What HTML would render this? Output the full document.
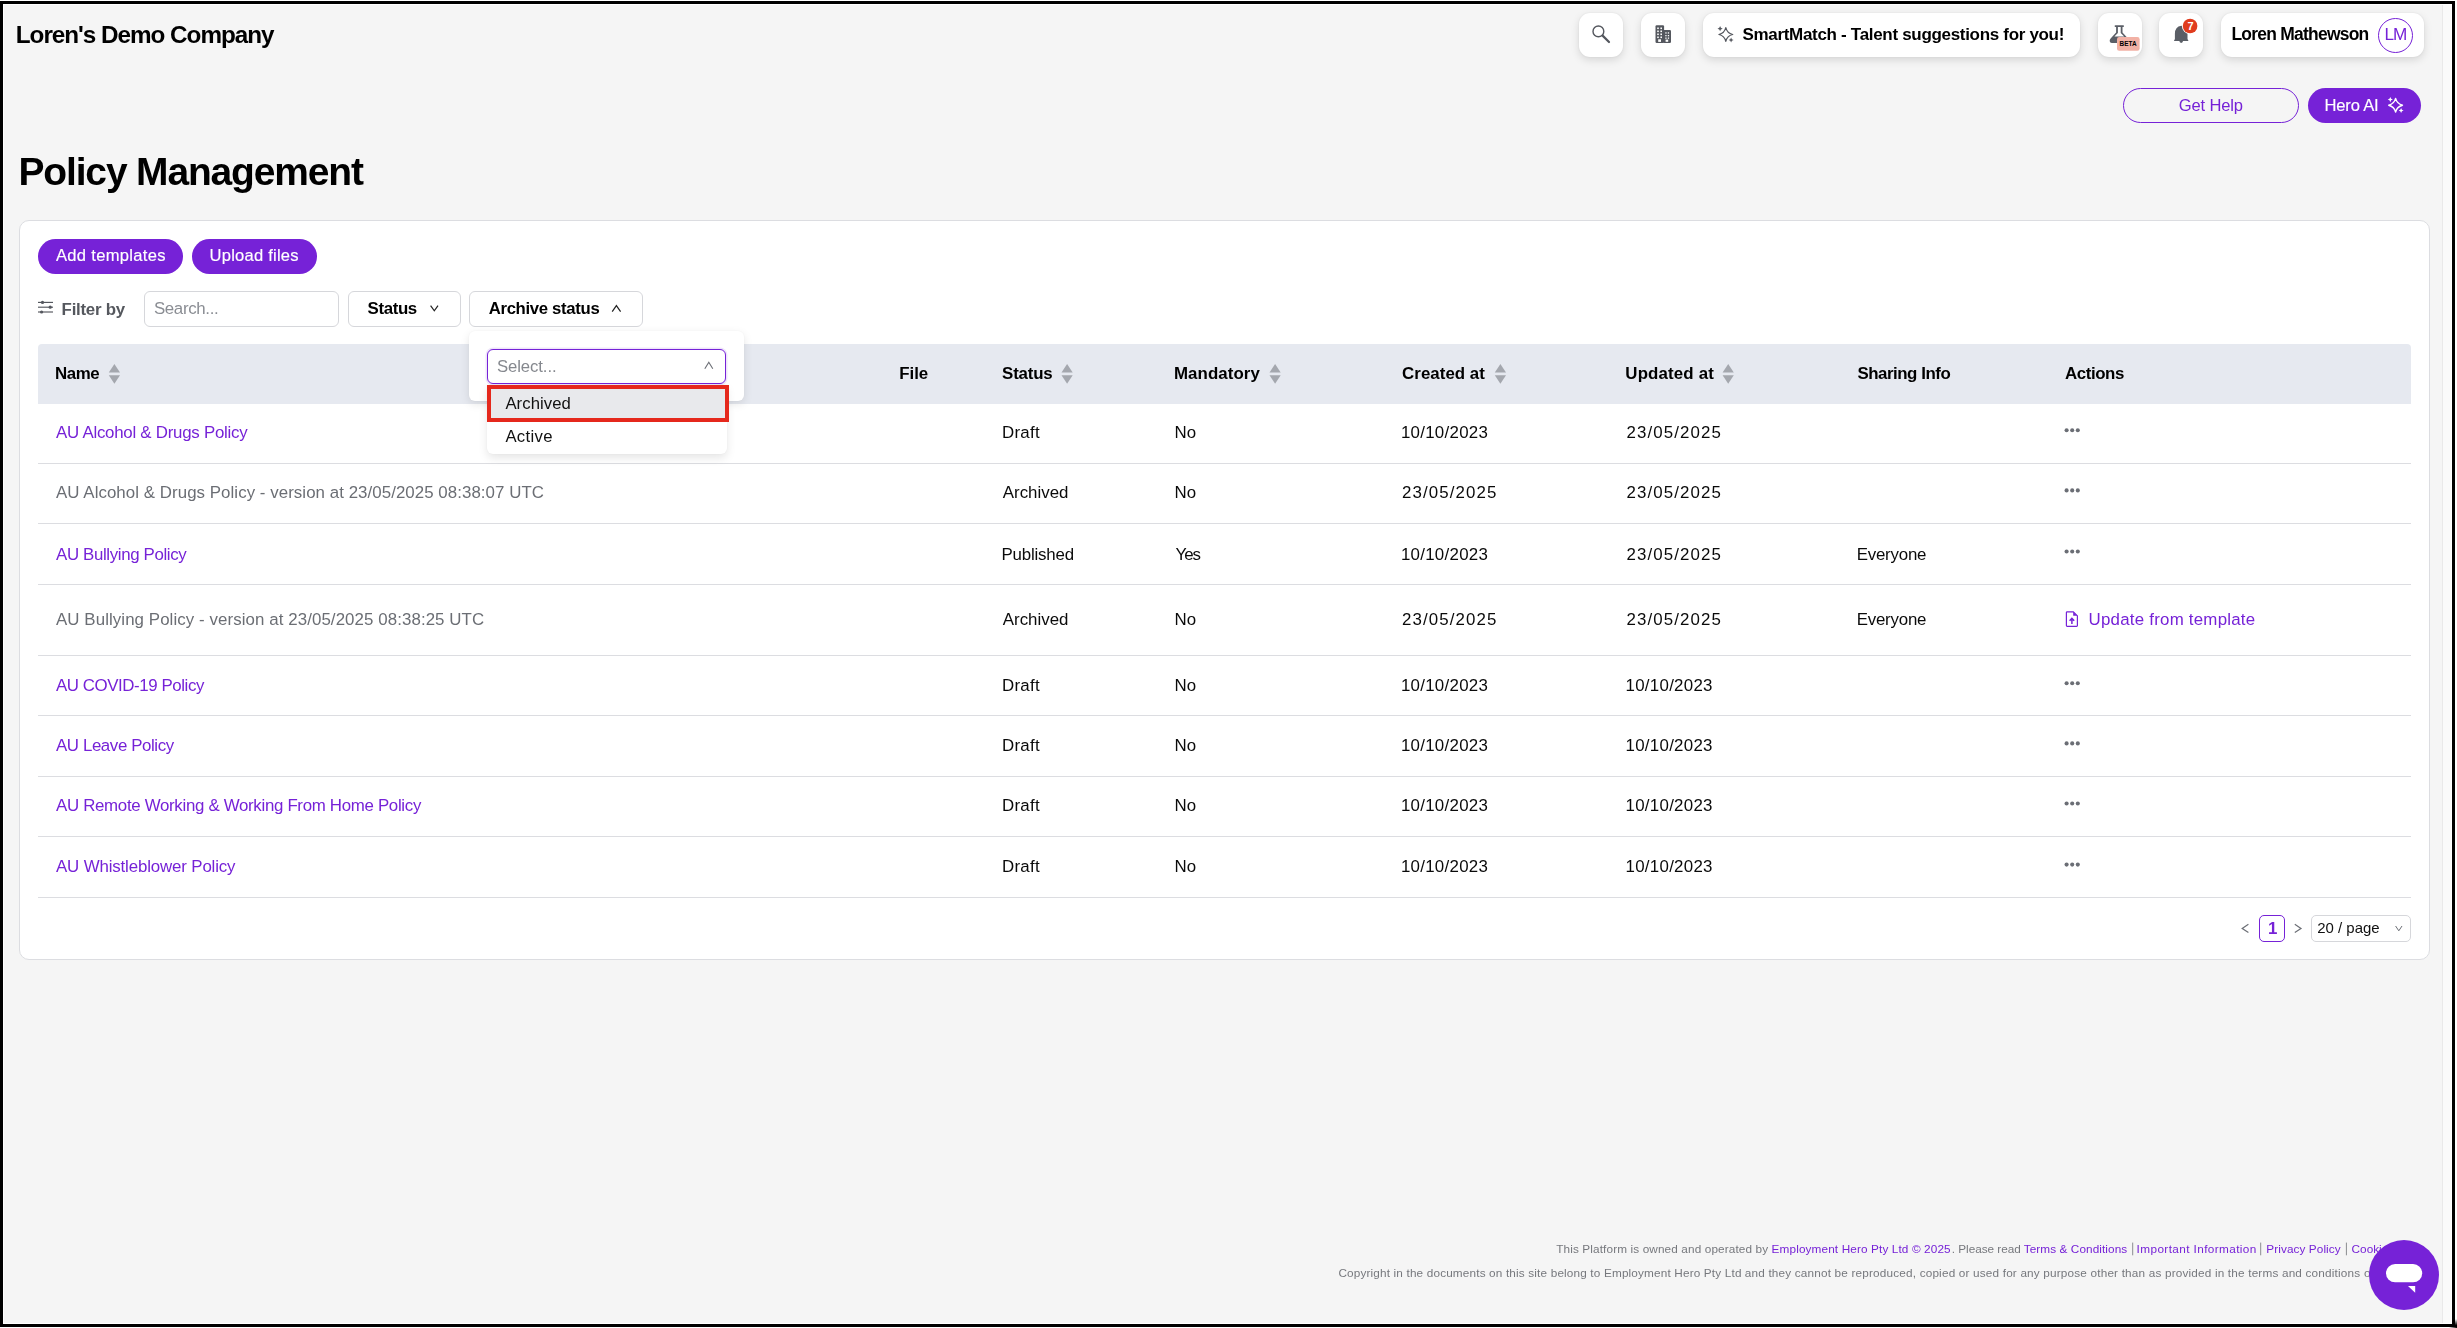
<!DOCTYPE html>
<html><head><meta charset="utf-8">
<style>
html,body{margin:0;padding:0;}
body{width:2457px;height:1328px;overflow:hidden;position:relative;background:#fff;font-family:"Liberation Sans",sans-serif;}
.a{position:absolute;box-sizing:border-box;}
.tl{position:absolute;left:0;top:0;font-family:"Liberation Sans",sans-serif;will-change:transform;}
.tb{background:#fff;border-radius:11px;box-shadow:0 3px 9px rgba(0,0,0,0.13),0 0 2px rgba(0,0,0,0.07);}
.line{position:absolute;left:38px;width:2373px;height:1px;background:#dcdde1;}
.ic{position:absolute;left:0;top:0;overflow:visible;}
</style></head><body>
<!-- frame -->
<div class="a" style="left:0;top:1px;width:2455px;height:1326px;background:#000"></div>
<div class="a" style="left:3px;top:4px;width:2449px;height:1320px;background:#fff"></div>
<div class="a" style="left:4px;top:5px;width:2447px;height:1318px;background:#f5f5f5"></div>
<div class="a" style="left:2442px;top:5px;width:1px;height:1318px;background:#e9e9e9"></div>
<div class="a" style="left:2443px;top:5px;width:8px;height:1318px;background:#fafafa"></div>
<div class="a" style="left:2455px;top:1319px;width:2px;height:9px;background:linear-gradient(#fff,#000 70%)"></div>
<div class="a" style="left:2449px;top:1327px;width:8px;height:1px;background:linear-gradient(90deg,#fff,#000)"></div>

<!-- top bar -->
<div class="a tb" style="left:1579px;top:13px;width:44px;height:44px"></div>
<div class="a tb" style="left:1641px;top:13px;width:44px;height:44px"></div>
<div class="a tb" style="left:1703px;top:13px;width:377px;height:44px"></div>
<div class="a tb" style="left:2098px;top:13px;width:44px;height:44px"></div>
<div class="a tb" style="left:2159px;top:13px;width:44px;height:44px"></div>
<div class="a tb" style="left:2221px;top:13px;width:203px;height:44px"></div>
<div class="a" style="left:2378px;top:18px;width:35px;height:35px;border:1.3px solid #7622d7;border-radius:50%"></div>

<div class="a" style="left:2123px;top:88px;width:176px;height:35px;border:1.3px solid #7622d7;border-radius:18px"></div>
<div class="a" style="left:2308px;top:88px;width:113px;height:35px;background:#7622d7;border-radius:18px"></div>

<!-- card -->
<div class="a" style="left:19px;top:220px;width:2411px;height:740px;background:#fff;border:1px solid #dcdde1;border-radius:10px"></div>
<div class="a" style="left:38px;top:239px;width:145px;height:35px;background:#7622d7;border-radius:18px"></div>
<div class="a" style="left:192px;top:239px;width:125px;height:35px;background:#7622d7;border-radius:18px"></div>

<div class="a" style="left:144px;top:291px;width:195px;height:36px;border:1px solid #d6d7db;border-radius:6px"></div>
<div class="a" style="left:348px;top:291px;width:113px;height:36px;border:1px solid #d6d7db;border-radius:6px"></div>
<div class="a" style="left:469px;top:291px;width:174px;height:36px;border:1px solid #d6d7db;border-radius:6px"></div>

<!-- table -->
<div class="a" style="left:38px;top:344px;width:2373px;height:60px;background:#e6e9f0;border-radius:4px 4px 0 0"></div>
<div class="line" style="top:463px"></div>
<div class="line" style="top:523px"></div>
<div class="line" style="top:584px"></div>
<div class="line" style="top:655px"></div>
<div class="line" style="top:715px"></div>
<div class="line" style="top:776px"></div>
<div class="line" style="top:836px"></div>
<div class="line" style="top:897px"></div>

<!-- pagination -->
<div class="a" style="left:2259px;top:915px;width:26px;height:27px;border:1px solid #7622d7;border-radius:5px"></div>
<div class="a" style="left:2311px;top:915px;width:100px;height:27px;border:1px solid #d6d7db;border-radius:5px"></div>

<!-- icons main -->
<svg class="ic" width="2457" height="1328">
  <!-- search -->
  <circle cx="1598.4" cy="31.4" r="5.4" fill="none" stroke="#54575e" stroke-width="1.4"/>
  <line x1="1602.6" y1="35.6" x2="1609" y2="42" stroke="#54575e" stroke-width="2.2" stroke-linecap="round"/>
  <!-- building -->
  <g fill="#54575e">
    <rect x="1655.5" y="25.3" width="8.6" height="17.6" rx="1.2"/>
    <rect x="1663.2" y="30" width="7.8" height="12.9" rx="1.2"/>
  </g>
  <g fill="#fff">
    <rect x="1657.2" y="27.5" width="1.6" height="1.6"/><rect x="1660.4" y="27.5" width="1.6" height="1.6"/>
    <rect x="1657.2" y="30.5" width="1.6" height="1.6"/><rect x="1660.4" y="30.5" width="1.6" height="1.6"/>
    <rect x="1657.2" y="33.5" width="1.6" height="1.6"/><rect x="1660.4" y="33.5" width="1.6" height="1.6"/>
    <rect x="1657.2" y="36.5" width="1.6" height="1.6"/><rect x="1660.4" y="36.5" width="1.6" height="1.6"/>
    <rect x="1658.2" y="39.3" width="2.8" height="2.6"/>
    <rect x="1665.3" y="32.3" width="1.3" height="1.3"/><rect x="1667.8" y="32.3" width="1.3" height="1.3"/>
    <rect x="1665.3" y="35" width="1.3" height="1.3"/><rect x="1667.8" y="35" width="1.3" height="1.3"/>
    <rect x="1665.3" y="37.5" width="1.3" height="1.3"/><rect x="1667.8" y="37.5" width="1.3" height="1.3"/>
    <rect x="1665.6" y="39.6" width="2.6" height="2.2"/>
  </g>
  <!-- sparkle smartmatch -->
  <path d="M1725.80 27.70 Q1727.10 33.20 1732.70 34.50 Q1727.10 35.80 1725.80 41.30 Q1724.50 35.80 1718.90 34.50 Q1724.50 33.20 1725.80 27.70 Z" fill="none" stroke="#54575e" stroke-width="1.25" stroke-linejoin="round"/>
  <path d="M1720.10 26.10 Q1720.40 28.40 1722.70 28.70 Q1720.40 29.00 1720.10 31.30 Q1719.80 29.00 1717.50 28.70 Q1719.80 28.40 1720.10 26.10 Z" fill="#54575e"/>
  <path d="M1731.10 37.40 Q1731.40 39.60 1733.60 39.90 Q1731.40 40.20 1731.10 42.40 Q1730.80 40.20 1728.60 39.90 Q1730.80 39.60 1731.10 37.40 Z" fill="#54575e"/>
  <!-- flask -->
  <path d="M2115.4 25.2 H2123.2 Q2124 25.2 2124 26.1 Q2124 27 2123.2 27 H2122.5 V32.4 L2128 38.4 Q2129.3 39.9 2128.8 41.4 Q2128.3 42.9 2126.5 42.9 H2112.1 Q2110.3 42.9 2109.8 41.4 Q2109.3 39.9 2110.6 38.4 L2116.1 32.4 V27 H2115.4 Q2114.6 27 2114.6 26.1 Q2114.6 25.2 2115.4 25.2 Z" fill="#5a5e66"/>
  <path d="M2117.9 27 H2120.7 V33 L2124.2 36.6 H2114.4 L2117.9 33 Z" fill="#fff"/>
  <rect x="2117" y="37.1" width="22.6" height="13.6" rx="2.2" fill="#f2b1a5"/>
  <text x="2119.6" y="45.9" font-family="Liberation Sans" font-weight="bold" font-size="6.8" textLength="17" lengthAdjust="spacingAndGlyphs" fill="#000">BETA</text>
  <!-- bell -->
  <path d="M2181.2 25.7 q-6.2 0.8 -6.3 8 v5.4 l-1 1.8 h14.6 l-1 -1.8 v-5.4 q-0.1 -7.2 -6.3 -8 z" fill="#5a5e66"/>
  <path d="M2179.4 41.1 a1.8 1.8 0 0 0 3.6 0 z" fill="#5a5e66"/>
  <circle cx="2190.1" cy="26" r="8.2" fill="#fff"/>
  <circle cx="2190.1" cy="26" r="7.3" fill="#e03c1e"/>
  <text x="2187.4" y="30.2" font-family="Liberation Sans" font-weight="bold" font-size="11" fill="#fff">7</text>
  <!-- hero ai sparkle -->
  <path d="M2395.60 98.40 Q2397.00 103.80 2402.50 105.20 Q2397.00 106.60 2395.60 112.00 Q2394.20 106.60 2388.70 105.20 Q2394.20 103.80 2395.60 98.40 Z" fill="none" stroke="#fff" stroke-width="1.4" stroke-linejoin="round"/>
  <path d="M2390.30 97.00 Q2390.65 99.25 2392.90 99.60 Q2390.65 99.95 2390.30 102.20 Q2389.95 99.95 2387.70 99.60 Q2389.95 99.25 2390.30 97.00 Z" fill="#fff"/>
  <path d="M2401.10 108.10 Q2401.45 110.25 2403.60 110.60 Q2401.45 110.95 2401.10 113.10 Q2400.75 110.95 2398.60 110.60 Q2400.75 110.25 2401.10 108.10 Z" fill="#fff"/>
  <!-- filter icon -->
  <g stroke="#54575e" stroke-width="1.15">
    <line x1="38" y1="302.4" x2="53" y2="302.4"/>
    <line x1="38" y1="307.2" x2="53" y2="307.2"/>
    <line x1="38" y1="312" x2="53" y2="312"/>
  </g>
  <g fill="#54575e">
    <circle cx="42.5" cy="302.4" r="1.6"/>
    <circle cx="50.2" cy="307.2" r="1.6"/>
    <circle cx="41.6" cy="312" r="1.6"/>
  </g>
  <!-- chevrons -->
  <path d="M430.6 305.6 L434.3 310.8 L438 305.6" fill="none" stroke="#222" stroke-width="1.2"/>
  <path d="M612.2 311.6 L616.4 305.6 L620.6 311.6" fill="none" stroke="#222" stroke-width="1.2"/>
  <!-- sort icons -->
  <g fill="#a4a7ae">
    <path d="M108.8 372.5 L114.4 364 L120 372.5 Z"/><path d="M108.8 375.3 L114.4 383.8 L120 375.3 Z"/>
    <path d="M1061.5 372.5 L1067.1 364 L1072.7 372.5 Z"/><path d="M1061.5 375.3 L1067.1 383.8 L1072.7 375.3 Z"/>
    <path d="M1269.5 372.5 L1275.1 364 L1280.7 372.5 Z"/><path d="M1269.5 375.3 L1275.1 383.8 L1280.7 375.3 Z"/>
    <path d="M1494.8 372.5 L1500.4 364 L1506 372.5 Z"/><path d="M1494.8 375.3 L1500.4 383.8 L1506 375.3 Z"/>
    <path d="M1722.6 372.5 L1728.2 364 L1733.8 372.5 Z"/><path d="M1722.6 375.3 L1728.2 383.8 L1733.8 375.3 Z"/>
  </g>
  <!-- dots -->
  <g fill="#6b6e75">
    <circle cx="2066.6" cy="430.2" r="2.05"/><circle cx="2072.2" cy="430.2" r="2.05"/><circle cx="2077.8" cy="430.2" r="2.05"/>
    <circle cx="2066.6" cy="490.4" r="2.05"/><circle cx="2072.2" cy="490.4" r="2.05"/><circle cx="2077.8" cy="490.4" r="2.05"/>
    <circle cx="2066.6" cy="551.5" r="2.05"/><circle cx="2072.2" cy="551.5" r="2.05"/><circle cx="2077.8" cy="551.5" r="2.05"/>
    <circle cx="2066.6" cy="683.2" r="2.05"/><circle cx="2072.2" cy="683.2" r="2.05"/><circle cx="2077.8" cy="683.2" r="2.05"/>
    <circle cx="2066.6" cy="743.4" r="2.05"/><circle cx="2072.2" cy="743.4" r="2.05"/><circle cx="2077.8" cy="743.4" r="2.05"/>
    <circle cx="2066.6" cy="803.5" r="2.05"/><circle cx="2072.2" cy="803.5" r="2.05"/><circle cx="2077.8" cy="803.5" r="2.05"/>
    <circle cx="2066.6" cy="864.6" r="2.05"/><circle cx="2072.2" cy="864.6" r="2.05"/><circle cx="2077.8" cy="864.6" r="2.05"/>
  </g>
  <!-- update from template icon -->
  <path d="M2067.2 611.8 h6.2 l4 4 v9.8 q0 0.8 -0.8 0.8 h-9.4 q-0.8 0 -0.8 -0.8 v-13 q0 -0.8 0.8 -0.8 z" fill="none" stroke="#7622d7" stroke-width="1.2" stroke-linejoin="round"/>
  <path d="M2073.2 611.8 v4 h4 z" fill="#7622d7"/>
  <path d="M2071.9 624 v-5.4 M2069.6 620.8 l2.3 -2.4 l2.3 2.4" fill="none" stroke="#7622d7" stroke-width="1.5"/>
  <!-- pagination arrows -->
  <path d="M2248.4 924.3 L2242.2 928.4 L2248.4 932.5" fill="none" stroke="#6b6e75" stroke-width="1.2"/>
  <path d="M2294.8 924.3 L2301 928.4 L2294.8 932.5" fill="none" stroke="#6b6e75" stroke-width="1.2"/>
  <path d="M2395.6 926 L2398.8 930.8 L2402 926" fill="none" stroke="#6b6e75" stroke-width="1"/>
  <!-- footer separators -->
  <g stroke="#8a8c90" stroke-width="1">
    <line x1="2132.7" y1="1242.6" x2="2132.7" y2="1255.3"/>
    <line x1="2260.7" y1="1242.6" x2="2260.7" y2="1255.3"/>
    <line x1="2346.4" y1="1242.6" x2="2346.4" y2="1255.3"/>
  </g>
</svg>
<svg class="tl" width="2457" height="1328"><text x="15.80" y="43.00" font-size="24.27" fill="#000" font-weight="bold" textLength="258.70" lengthAdjust="spacing">Loren&#x27;s Demo Company</text><text x="1742.50" y="40.00" font-size="17.01" fill="#000" font-weight="bold" textLength="321.86" lengthAdjust="spacing">SmartMatch - Talent suggestions for you!</text><text x="2231.40" y="40.20" font-size="17.44" fill="#000" font-weight="bold" textLength="137.85" lengthAdjust="spacing">Loren Mathewson</text><text x="2384.40" y="40.00" font-size="17.15" fill="#7622d7" textLength="22.88" lengthAdjust="spacing">LM</text><text x="2178.80" y="111.00" font-size="16.57" fill="#7622d7" textLength="64.11" lengthAdjust="spacing">Get Help</text><text x="2324.60" y="111.00" font-size="16.57" fill="#fff" textLength="54.00" lengthAdjust="spacing" stroke="#fff" stroke-width="0.15">Hero AI</text><text x="18.50" y="185.40" font-size="38.95" fill="#000" font-weight="bold" textLength="345.37" lengthAdjust="spacing">Policy Management</text><text x="55.90" y="261.00" font-size="16.57" fill="#fff" textLength="109.68" lengthAdjust="spacing" stroke="#fff" stroke-width="0.15">Add templates</text><text x="209.50" y="261.00" font-size="16.57" fill="#fff" textLength="89.08" lengthAdjust="spacing" stroke="#fff" stroke-width="0.15">Upload files</text><text x="61.60" y="314.50" font-size="16.86" fill="#55585e" font-weight="bold" textLength="63.58" lengthAdjust="spacing">Filter by</text><text x="153.90" y="314.00" font-size="16.86" fill="#8a8d93" textLength="64.78" lengthAdjust="spacing">Search...</text><text x="367.60" y="314.00" font-size="16.86" fill="#000" font-weight="bold" textLength="49.58" lengthAdjust="spacing">Status</text><text x="488.70" y="314.00" font-size="16.72" fill="#000" font-weight="bold" textLength="110.99" lengthAdjust="spacing">Archive status</text><text x="54.90" y="379.30" font-size="16.86" fill="#000" font-weight="bold" textLength="44.78" lengthAdjust="spacing">Name</text><text x="899.30" y="379.30" font-size="16.86" fill="#000" font-weight="bold" textLength="28.88" lengthAdjust="spacing">File</text><text x="1002.10" y="379.30" font-size="16.86" fill="#000" font-weight="bold" textLength="50.58" lengthAdjust="spacing">Status</text><text x="1174.00" y="379.30" font-size="16.86" fill="#000" font-weight="bold" textLength="85.78" lengthAdjust="spacing">Mandatory</text><text x="1402.10" y="379.30" font-size="16.86" fill="#000" font-weight="bold" textLength="82.81" lengthAdjust="spacing">Created at</text><text x="1625.30" y="379.30" font-size="16.86" fill="#000" font-weight="bold" textLength="88.51" lengthAdjust="spacing">Updated at</text><text x="1857.40" y="379.30" font-size="16.86" fill="#000" font-weight="bold" textLength="93.30" lengthAdjust="spacing">Sharing Info</text><text x="2065.00" y="379.30" font-size="16.86" fill="#000" font-weight="bold" textLength="59.38" lengthAdjust="spacing">Actions</text><text x="56.00" y="437.90" font-size="16.86" fill="#7622d7" textLength="191.63" lengthAdjust="spacing">AU Alcohol &amp; Drugs Policy</text><text x="1001.90" y="437.90" font-size="16.86" fill="#0a0a0a" textLength="37.88" lengthAdjust="spacing">Draft</text><text x="1174.60" y="437.90" font-size="16.86" fill="#0a0a0a" textLength="21.48" lengthAdjust="spacing">No</text><text x="1400.90" y="437.90" font-size="16.86" fill="#0a0a0a" textLength="86.98" lengthAdjust="spacing">10/10/2023</text><text x="1626.50" y="437.90" font-size="16.86" fill="#0a0a0a" textLength="94.48" lengthAdjust="spacing">23/05/2025</text><text x="56.00" y="498.30" font-size="16.86" fill="#6b6e74" textLength="487.98" lengthAdjust="spacing">AU Alcohol &amp; Drugs Policy - version at 23/05/2025 08:38:07 UTC</text><text x="1002.80" y="498.30" font-size="16.86" fill="#0a0a0a" textLength="65.68" lengthAdjust="spacing">Archived</text><text x="1174.60" y="498.30" font-size="16.86" fill="#0a0a0a" textLength="21.48" lengthAdjust="spacing">No</text><text x="1401.90" y="498.30" font-size="16.86" fill="#0a0a0a" textLength="94.48" lengthAdjust="spacing">23/05/2025</text><text x="1626.50" y="498.30" font-size="16.86" fill="#0a0a0a" textLength="94.48" lengthAdjust="spacing">23/05/2025</text><text x="56.00" y="559.60" font-size="16.86" fill="#7622d7" textLength="130.73" lengthAdjust="spacing">AU Bullying Policy</text><text x="1001.50" y="559.60" font-size="16.86" fill="#0a0a0a" textLength="72.68" lengthAdjust="spacing">Published</text><text x="1175.60" y="559.60" font-size="16.86" fill="#0a0a0a" textLength="25.33" lengthAdjust="spacing">Yes</text><text x="1400.90" y="559.60" font-size="16.86" fill="#0a0a0a" textLength="86.98" lengthAdjust="spacing">10/10/2023</text><text x="1626.50" y="559.60" font-size="16.86" fill="#0a0a0a" textLength="94.48" lengthAdjust="spacing">23/05/2025</text><text x="1856.70" y="559.60" font-size="16.86" fill="#0a0a0a" textLength="69.78" lengthAdjust="spacing">Everyone</text><text x="56.00" y="625.30" font-size="16.86" fill="#6b6e74" textLength="428.18" lengthAdjust="spacing">AU Bullying Policy - version at 23/05/2025 08:38:25 UTC</text><text x="1002.80" y="625.30" font-size="16.86" fill="#0a0a0a" textLength="65.68" lengthAdjust="spacing">Archived</text><text x="1174.60" y="625.30" font-size="16.86" fill="#0a0a0a" textLength="21.48" lengthAdjust="spacing">No</text><text x="1401.90" y="625.30" font-size="16.86" fill="#0a0a0a" textLength="94.48" lengthAdjust="spacing">23/05/2025</text><text x="1626.50" y="625.30" font-size="16.86" fill="#0a0a0a" textLength="94.48" lengthAdjust="spacing">23/05/2025</text><text x="1856.70" y="625.30" font-size="16.86" fill="#0a0a0a" textLength="69.78" lengthAdjust="spacing">Everyone</text><text x="56.00" y="690.80" font-size="16.86" fill="#7622d7" textLength="148.33" lengthAdjust="spacing">AU COVID-19 Policy</text><text x="1001.90" y="690.80" font-size="16.86" fill="#0a0a0a" textLength="37.88" lengthAdjust="spacing">Draft</text><text x="1174.60" y="690.80" font-size="16.86" fill="#0a0a0a" textLength="21.48" lengthAdjust="spacing">No</text><text x="1400.90" y="690.80" font-size="16.86" fill="#0a0a0a" textLength="86.98" lengthAdjust="spacing">10/10/2023</text><text x="1625.50" y="690.80" font-size="16.86" fill="#0a0a0a" textLength="86.98" lengthAdjust="spacing">10/10/2023</text><text x="56.00" y="751.00" font-size="16.86" fill="#7622d7" textLength="118.13" lengthAdjust="spacing">AU Leave Policy</text><text x="1001.90" y="751.00" font-size="16.86" fill="#0a0a0a" textLength="37.88" lengthAdjust="spacing">Draft</text><text x="1174.60" y="751.00" font-size="16.86" fill="#0a0a0a" textLength="21.48" lengthAdjust="spacing">No</text><text x="1400.90" y="751.00" font-size="16.86" fill="#0a0a0a" textLength="86.98" lengthAdjust="spacing">10/10/2023</text><text x="1625.50" y="751.00" font-size="16.86" fill="#0a0a0a" textLength="86.98" lengthAdjust="spacing">10/10/2023</text><text x="56.00" y="811.30" font-size="16.86" fill="#7622d7" textLength="365.33" lengthAdjust="spacing">AU Remote Working &amp; Working From Home Policy</text><text x="1001.90" y="811.30" font-size="16.86" fill="#0a0a0a" textLength="37.88" lengthAdjust="spacing">Draft</text><text x="1174.60" y="811.30" font-size="16.86" fill="#0a0a0a" textLength="21.48" lengthAdjust="spacing">No</text><text x="1400.90" y="811.30" font-size="16.86" fill="#0a0a0a" textLength="86.98" lengthAdjust="spacing">10/10/2023</text><text x="1625.50" y="811.30" font-size="16.86" fill="#0a0a0a" textLength="86.98" lengthAdjust="spacing">10/10/2023</text><text x="56.00" y="872.40" font-size="16.86" fill="#7622d7" textLength="179.53" lengthAdjust="spacing">AU Whistleblower Policy</text><text x="1001.90" y="872.40" font-size="16.86" fill="#0a0a0a" textLength="37.88" lengthAdjust="spacing">Draft</text><text x="1174.60" y="872.40" font-size="16.86" fill="#0a0a0a" textLength="21.48" lengthAdjust="spacing">No</text><text x="1400.90" y="872.40" font-size="16.86" fill="#0a0a0a" textLength="86.98" lengthAdjust="spacing">10/10/2023</text><text x="1625.50" y="872.40" font-size="16.86" fill="#0a0a0a" textLength="86.98" lengthAdjust="spacing">10/10/2023</text><text x="2088.50" y="625.30" font-size="16.86" fill="#7622d7" textLength="166.68" lengthAdjust="spacing">Update from template</text><text x="2268.00" y="934.00" font-size="16.86" fill="#7622d7" font-weight="bold">1</text><text x="2317.20" y="933.20" font-size="14.97" fill="#111" textLength="62.42" lengthAdjust="spacing">20 / page</text><text x="1556.20" y="1253.10" font-size="11.77" fill="#76787d" textLength="211.88" lengthAdjust="spacing">This Platform is owned and operated by</text><text x="1771.60" y="1253.10" font-size="11.77" fill="#7622d7" textLength="179.04" lengthAdjust="spacing">Employment Hero Pty Ltd © 2025</text><text x="1951.80" y="1253.10" font-size="11.77" fill="#76787d" textLength="68.94" lengthAdjust="spacing">. Please read</text><text x="2023.70" y="1253.10" font-size="11.77" fill="#7622d7" textLength="103.48" lengthAdjust="spacing">Terms &amp; Conditions</text><text x="2136.60" y="1253.10" font-size="11.77" fill="#7622d7" textLength="119.74" lengthAdjust="spacing">Important Information</text><text x="2266.30" y="1253.10" font-size="11.77" fill="#7622d7" textLength="74.38" lengthAdjust="spacing">Privacy Policy</text><text x="2351.60" y="1253.10" font-size="11.77" fill="#7622d7">Cookie Policy</text><text x="1338.40" y="1277.00" font-size="11.77" fill="#76787d" textLength="403.04" lengthAdjust="spacing">Copyright in the documents on this site belong to Employment Hero Pty Ltd</text><text x="1744.80" y="1277.00" font-size="11.77" fill="#76787d" textLength="615.28" lengthAdjust="spacing">and they cannot be reproduced, copied or used for any purpose other than as provided in the terms and conditions</text><text x="2364.00" y="1277.00" font-size="11.77" fill="#76787d">of use.</text></svg>

<!-- dropdown -->
<div class="a" style="left:469px;top:331px;width:275px;height:70px;background:#fff;border-radius:6px;box-shadow:0 3px 10px rgba(0,0,0,0.10),0 0 2px rgba(0,0,0,0.06)"></div>
<div class="a" style="left:487px;top:349px;width:239px;height:35px;background:#fff;border:1.5px solid #7622d7;border-radius:6px;box-shadow:0 0 0 1.5px rgba(118,34,215,0.12)"></div>
<div class="a" style="left:487px;top:385px;width:240px;height:69px;background:#fff;border-radius:0 0 6px 6px;box-shadow:0 4px 10px rgba(0,0,0,0.10),0 0 2px rgba(0,0,0,0.05)"></div>
<div class="a" style="left:487px;top:385px;width:242px;height:37px;background:#e8e9ec;border:4px solid #e5281c"></div>
<svg class="ic" width="2457" height="1328">
  <path d="M704.8 368.8 L708.8 362.2 L712.8 368.8" fill="none" stroke="#6b6e75" stroke-width="1.1"/>
</svg>
<svg class="tl" width="2457" height="1328"><text x="496.90" y="372.20" font-size="16.72" fill="#85888e" textLength="59.74" lengthAdjust="spacing">Select...</text><text x="505.40" y="408.80" font-size="16.72" fill="#111" textLength="65.39" lengthAdjust="spacing">Archived</text><text x="505.40" y="442.00" font-size="16.72" fill="#111" textLength="47.09" lengthAdjust="spacing">Active</text></svg>

<!-- chat -->
<div class="a" style="left:2369px;top:1240px;width:70px;height:70px;background:#7622d7;border-radius:50%"></div>
<svg class="ic" width="2457" height="1328">
  <rect x="2386" y="1264" width="36.2" height="18.3" rx="9.1" fill="#fff"/>
  <path d="M2408 1286 L2415.2 1286 L2415.2 1292.8 Z" fill="#fff"/>
</svg>
</body></html>
